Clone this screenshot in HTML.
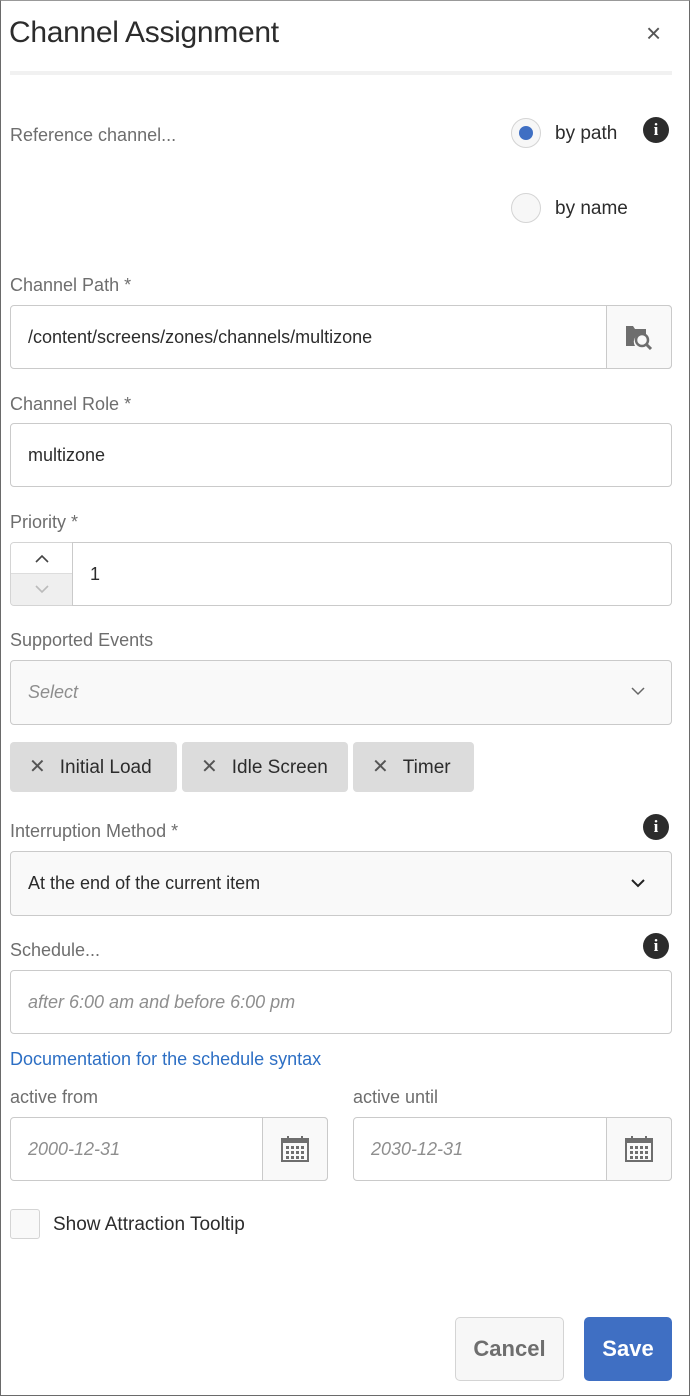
<!DOCTYPE html>
<html><head><meta charset="utf-8"><style>
*{box-sizing:border-box;margin:0;padding:0}
body{width:690px;height:1396px;background:#fff;font-family:"Liberation Sans",sans-serif;position:relative;overflow:hidden}
.frame{position:absolute;left:0;top:0;width:690px;height:1396px;border:1px solid #6a6a6a;border-top-color:#999}
.a{position:absolute}
.lbl{position:absolute;left:10px;font-size:18px;color:#6e6e6e;line-height:22px}
.inp{position:absolute;border:1px solid #cacaca;border-radius:4px;background:#fff;font-size:18px;color:#2c2c2c;padding-left:17px;display:flex;align-items:center}
.ph{color:#8e8e8e;font-style:italic}
.btn{position:absolute;top:-1px;bottom:-1px;border:1px solid #cacaca;background:#f9f9f9;display:flex;align-items:center;justify-content:center;border-radius:0 4px 4px 0}
.info{position:absolute;width:26px;height:26px;border-radius:50%;background:#2c2c2c;color:#fff;font:bold 17px "Liberation Serif",serif;text-align:center;line-height:26px}
.tag{position:absolute;top:742px;height:50px;background:#dcdcdc;border-radius:4px;font-size:19px;color:#2c2c2c;line-height:50px;padding-left:19px}
.tag span{margin-right:14px;font-size:20px;color:#555}
</style></head><body>
<div class="frame"></div>
<div class="a" style="left:9px;top:14px;font-size:30px;color:#2c2c2c;line-height:38px;letter-spacing:-0.3px">Channel Assignment</div>
<div class="a" style="left:646px;top:18px;font-size:26px;color:#555;line-height:30px">×</div>
<div class="a" style="left:10px;top:71px;width:662px;height:4px;background:#f1f1f1"></div>

<div class="lbl" style="top:124px">Reference channel...</div>
<div class="a" style="left:511px;top:118px;width:30px;height:30px;border-radius:50%;border:1px solid #d4d4d4;background:#f7f7f7"></div>
<div class="a" style="left:519px;top:126px;width:14px;height:14px;border-radius:50%;background:#3f6fc3"></div>
<div class="a" style="left:555px;top:123px;font-size:19px;color:#2c2c2c">by path</div>
<div class="info" style="left:643px;top:117px">i</div>
<div class="a" style="left:511px;top:193px;width:30px;height:30px;border-radius:50%;border:1px solid #d4d4d4;background:#f7f7f7"></div>
<div class="a" style="left:555px;top:198px;font-size:19px;color:#2c2c2c">by name</div>

<div class="lbl" style="top:274px">Channel Path *</div>
<div class="inp" style="left:10px;top:305px;width:662px;height:64px">/content/screens/zones/channels/multizone
<div class="btn" style="right:-1px;width:66px"><svg width="30" height="26" viewBox="0 0 30 26"><path d="M2 2h7l2 3h11v6a8 8 0 0 0-11 11H2z" fill="#6e6e6e"/><circle cx="18" cy="16" r="6" fill="none" stroke="#6e6e6e" stroke-width="2.5"/><path d="M22 20l5 5" stroke="#6e6e6e" stroke-width="3"/></svg></div></div>

<div class="lbl" style="top:393px">Channel Role *</div>
<div class="inp" style="left:10px;top:423px;width:662px;height:64px">multizone</div>

<div class="lbl" style="top:511px">Priority *</div>
<div class="a" style="left:10px;top:542px;width:63px;height:64px;border:1px solid #d4d4d4;border-radius:4px 0 0 4px;background:#f9f9f9;overflow:hidden">
<div style="height:31px;border-bottom:1px solid #ddd;background:#fff;display:flex;align-items:center;justify-content:center"><svg width="14" height="9"><path d="M1 8l6-6 6 6" fill="none" stroke="#444" stroke-width="1.6"/></svg></div>
<div style="height:31px;background:#efefef;display:flex;align-items:center;justify-content:center"><svg width="14" height="9"><path d="M1 1l6 6 6-6" fill="none" stroke="#bbb" stroke-width="1.6"/></svg></div></div>
<div class="inp" style="left:72px;top:542px;width:600px;height:64px;border-radius:0 4px 4px 0">1</div>

<div class="lbl" style="top:629px">Supported Events</div>
<div class="inp" style="left:10px;top:660px;width:662px;height:65px;background:#f9f9f9"><span class="ph">Select</span>
<svg class="a" style="right:26px;top:26px" width="14" height="9"><path d="M1 1l6 6 6-6" fill="none" stroke="#666" stroke-width="1.5"/></svg></div>

<div class="tag" style="left:10px;width:167px"><span>✕</span>Initial Load</div>
<div class="tag" style="left:182px;width:166px"><span>✕</span>Idle Screen</div>
<div class="tag" style="left:353px;width:121px"><span>✕</span>Timer</div>

<div class="lbl" style="top:820px">Interruption Method *</div>
<div class="info" style="left:643px;top:814px">i</div>
<div class="inp" style="left:10px;top:851px;width:662px;height:65px;background:#f9f9f9">At the end of the current item
<svg class="a" style="right:26px;top:27px" width="14" height="9"><path d="M1 1l6 6 6-6" fill="none" stroke="#222" stroke-width="2"/></svg></div>

<div class="lbl" style="top:939px">Schedule...</div>
<div class="info" style="left:643px;top:933px">i</div>
<div class="inp" style="left:10px;top:970px;width:662px;height:64px"><span class="ph">after 6:00 am and before 6:00 pm</span></div>

<div class="a" style="left:10px;top:1049px;font-size:18px;color:#2d6fc4">Documentation for the schedule syntax</div>
<div class="lbl" style="top:1086px">active from</div>
<div class="lbl" style="top:1086px;left:353px">active until</div>
<div class="inp" style="left:10px;top:1117px;width:318px;height:64px"><span class="ph">2000-12-31</span>
<div class="btn" style="right:-1px;width:66px"><svg width="30" height="28" viewBox="0 0 30 28"><rect x="2" y="4" width="26" height="22" fill="none" stroke="#6e6e6e" stroke-width="2"/><rect x="2" y="4" width="26" height="4" fill="#6e6e6e"/><path d="M8 1v6M22 1v6" stroke="#6e6e6e" stroke-width="2"/><g fill="#6e6e6e"><rect x="6" y="11" width="3" height="3"/><rect x="11" y="11" width="3" height="3"/><rect x="16" y="11" width="3" height="3"/><rect x="21" y="11" width="3" height="3"/><rect x="6" y="16" width="3" height="3"/><rect x="11" y="16" width="3" height="3"/><rect x="16" y="16" width="3" height="3"/><rect x="21" y="16" width="3" height="3"/><rect x="6" y="21" width="3" height="3"/><rect x="11" y="21" width="3" height="3"/><rect x="16" y="21" width="3" height="3"/><rect x="21" y="21" width="3" height="3"/></g></svg></div></div>
<div class="inp" style="left:353px;top:1117px;width:319px;height:64px"><span class="ph">2030-12-31</span>
<div class="btn" style="right:-1px;width:66px"><svg width="30" height="28" viewBox="0 0 30 28"><rect x="2" y="4" width="26" height="22" fill="none" stroke="#6e6e6e" stroke-width="2"/><rect x="2" y="4" width="26" height="4" fill="#6e6e6e"/><path d="M8 1v6M22 1v6" stroke="#6e6e6e" stroke-width="2"/><g fill="#6e6e6e"><rect x="6" y="11" width="3" height="3"/><rect x="11" y="11" width="3" height="3"/><rect x="16" y="11" width="3" height="3"/><rect x="21" y="11" width="3" height="3"/><rect x="6" y="16" width="3" height="3"/><rect x="11" y="16" width="3" height="3"/><rect x="16" y="16" width="3" height="3"/><rect x="21" y="16" width="3" height="3"/><rect x="6" y="21" width="3" height="3"/><rect x="11" y="21" width="3" height="3"/><rect x="16" y="21" width="3" height="3"/><rect x="21" y="21" width="3" height="3"/></g></svg></div></div>

<div class="a" style="left:10px;top:1209px;width:30px;height:30px;border:1px solid #d4d4d4;border-radius:3px;background:#f9f9f9"></div>
<div class="a" style="left:53px;top:1214px;font-size:19px;color:#2c2c2c">Show Attraction Tooltip</div>

<div class="a" style="left:455px;top:1317px;width:109px;height:64px;border:1px solid #d4d4d4;border-radius:5px;background:#f7f7f7;color:#6e6e6e;font-size:22px;font-weight:bold;text-align:center;line-height:62px">Cancel</div>
<div class="a" style="left:584px;top:1317px;width:88px;height:64px;border-radius:5px;background:#3f6fc3;color:#fff;font-size:22px;font-weight:bold;text-align:center;line-height:64px">Save</div>
</body></html>
